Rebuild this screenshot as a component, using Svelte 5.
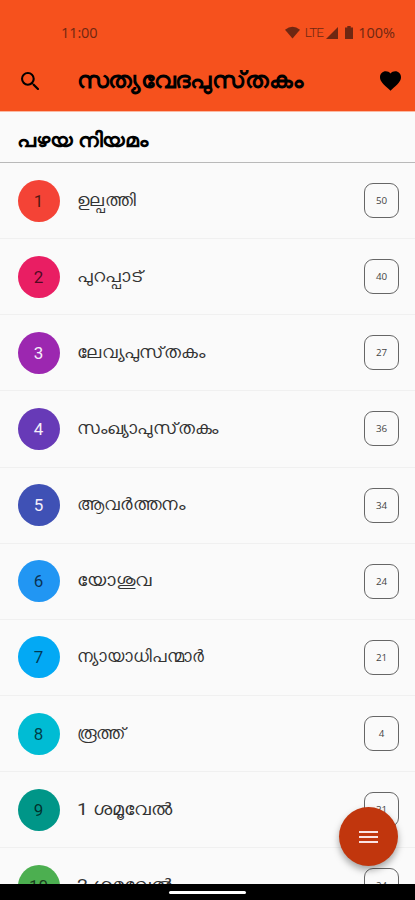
<script lang="ts">
  // \u200c keeps the virama visible instead of forming a conjunct
  const title = "സത്യവേദപുസ്\u200cതകം";

  // stretch widens a name without breaking the joins between its letters
  let books = [
    { name: "ഉല്പത്തി", chapters: 50, color: "#f44336", stretch: 1.02 },
    { name: "പുറപ്പാട്", chapters: 40, color: "#e91e63", stretch: 1.07 },
    { name: "ലേവ്യപുസ്\u200cതകം", chapters: 27, color: "#9c27b0", stretch: 1.04, light: true },
    { name: "സംഖ്യാപുസ്\u200cതകം", chapters: 36, color: "#673ab7", stretch: 1.04, light: true },
    { name: "ആവർത്തനം", chapters: 34, color: "#3f51b5", stretch: 1.05, light: true },
    { name: "യോശുവ", chapters: 24, color: "#2196f3", stretch: 1.1 },
    { name: "ന്യായാധിപന്മാർ", chapters: 21, color: "#03a9f4", stretch: 0.995 },
    { name: "രൂത്ത്", chapters: 4, color: "#00bcd4", stretch: 1.02 },
    { name: "1 ശമൂവേൽ", chapters: 31, color: "#009688", stretch: 1.12 },
    { name: "2 ശമൂവേൽ", chapters: 24, color: "#4caf50", stretch: 1.12 },
  ];
</script>

<div class="screen">
  <header>
    <div class="status">
      <span class="time">11:00</span>
      <svg class="wifi" viewBox="0 0 16 13"><path d="M0 3.5Q8-3 16 3.5L8 13Z" /></svg>
      <span class="lte">LTE</span>
      <svg class="signal" viewBox="0 0 12 12"><path d="M12 0V12H0Z" /></svg>
      <svg class="battery" viewBox="0 0 8 13"><path d="M2.3 0h3.4v1.5H8V13H0V1.5h2.3Z" /></svg>
      <span class="percent">100%</span>
    </div>
    <div class="toolbar">
      <svg class="search" viewBox="3 3 17.5 17.5">
        <path d="M15.5 14h-.79l-.28-.27A6.47 6.47 0 0 0 16 9.5 6.5 6.5 0 1 0 9.5 16c1.61 0 3.09-.59 4.23-1.57l.27.28v.79l5 4.99L20.49 19l-4.99-5zm-6 0C7.01 14 5 11.99 5 9.5S7.01 5 9.5 5 14 7.01 14 9.5 11.99 14 9.5 14z" />
      </svg>
      <h1>{title}</h1>
      <svg class="heart" viewBox="2 3 20 18.35">
        <path d="M12 21.35l-1.45-1.32C5.4 15.36 2 12.28 2 8.5 2 5.42 4.42 3 7.5 3c1.74 0 3.41.81 4.5 2.09C13.09 3.81 14.76 3 16.5 3 19.58 3 22 5.42 22 8.5c0 3.78-3.4 6.86-8.55 11.54L12 21.35z" />
      </svg>
    </div>
  </header>

  <h2><span>പഴയ നിയമം</span></h2>

  <ul>
    {#each books as book, i}
      <li>
        <span class="number" class:light={book.light} style="background-color: {book.color}">{i + 1}</span>
        <span class="name" style="transform: scaleX({book.stretch})">{book.name}</span>
        <span class="chapters">{book.chapters}</span>
      </li>
    {/each}
  </ul>

  <button class="fab" aria-label="Menu">
    <span></span>
    <span></span>
    <span></span>
  </button>

  <div class="nav"><span></span></div>
</div>

<style>
  :global(body) {
    margin: 0;
  }
  .screen {
    position: relative;
    display: flex;
    flex-direction: column;
    width: 415px;
    height: 900px;
    overflow: hidden;
    background-color: #fafafa;
    color: #000;
    font-family: Roboto, "Noto Sans", sans-serif;
  }
  header {
    flex: none;
    height: 111px;
    background-color: #f6511d;
    border-bottom: 1px solid #fbb9a2;
  }
  .status {
    display: flex;
    align-items: center;
    height: 20px;
    padding: 23px 20px 0 61px;
    color: #6f2712;
    fill: #6f2712;
  }
  .time {
    flex: 1;
    font: 14.5px/20px "Open Sans", sans-serif;
    letter-spacing: -0.1px;
  }
  .wifi {
    width: 15px;
    height: 13px;
    margin-bottom: 2px;
  }
  .lte {
    margin: 0 3px 2px 5px;
    font-size: 13.5px;
    font-weight: 300;
    letter-spacing: -0.9px;
  }
  .signal {
    width: 12px;
    height: 12px;
    margin-bottom: 1px;
  }
  .battery {
    width: 8px;
    height: 13px;
    margin: 0 5px 1px 7px;
  }
  .percent {
    font: 14.5px/20px "Open Sans", sans-serif;
  }
  .toolbar {
    display: flex;
    align-items: center;
    height: 68px;
    padding: 8px 14px 0 20.5px;
    box-sizing: border-box;
  }
  .search {
    width: 18.5px;
    height: 18.5px;
  }
  h1 {
    flex: 1;
    margin: 0 0 0 37.5px;
    font-size: 23px;
    line-height: 40px;
    font-weight: 600;
    white-space: nowrap;
    transform: scaleX(1.08);
    transform-origin: left;
  }
  .heart {
    width: 21px;
    height: 20px;
  }
  h2 {
    flex: none;
    height: 51px;
    margin: 0;
    padding: 3px 17px 0;
    box-sizing: border-box;
    border-bottom: 1px solid #b9b9b9;
    font-size: 20px;
    line-height: 50px;
    font-weight: 600;
  }
  h2 span {
    display: inline-block;
    transform: scaleX(1.11);
    transform-origin: left;
  }
  ul {
    flex: 1;
    min-height: 0;
    margin: 0;
    padding: 0;
    overflow: hidden;
    list-style: none;
  }
  li {
    display: flex;
    align-items: center;
    height: 76.15px;
    padding: 0 16px 0 17.5px;
    box-sizing: border-box;
    border-bottom: 1px solid #f0f0f0;
  }
  .number {
    width: 42px;
    height: 42px;
    border-radius: 50%;
    color: rgba(0, 0, 0, 0.68);
    font-size: 17px;
    line-height: 42px;
    text-align: center;
  }
  .number.light {
    color: #f5eefa;
  }
  .name {
    margin: 0 auto 2px 17px;
    color: #333;
    font-size: 17.4px;
    white-space: nowrap;
    transform-origin: left;
  }
  .chapters {
    width: 35px;
    height: 35px;
    box-sizing: border-box;
    border: 1px solid #666;
    border-radius: 9px;
    color: #444;
    font: 9.8px/33px "Open Sans", sans-serif;
    text-align: center;
  }
  .fab {
    position: absolute;
    right: 17px;
    bottom: 34px;
    display: flex;
    flex-direction: column;
    align-items: center;
    justify-content: center;
    gap: 3px;
    width: 59px;
    height: 59px;
    padding: 0;
    border: 0;
    border-radius: 50%;
    background-color: #c1360d;
    box-shadow: 0 4px 7px rgba(0, 0, 0, 0.35);
  }
  .fab span {
    width: 19px;
    height: 2px;
    background-color: #fbe3e3;
  }
  .nav {
    flex: none;
    display: flex;
    justify-content: center;
    height: 16px;
    background-color: #000;
  }
  .nav span {
    width: 77px;
    height: 3px;
    margin-top: 7px;
    border-radius: 2px;
    background-color: #fff;
  }
</style>
